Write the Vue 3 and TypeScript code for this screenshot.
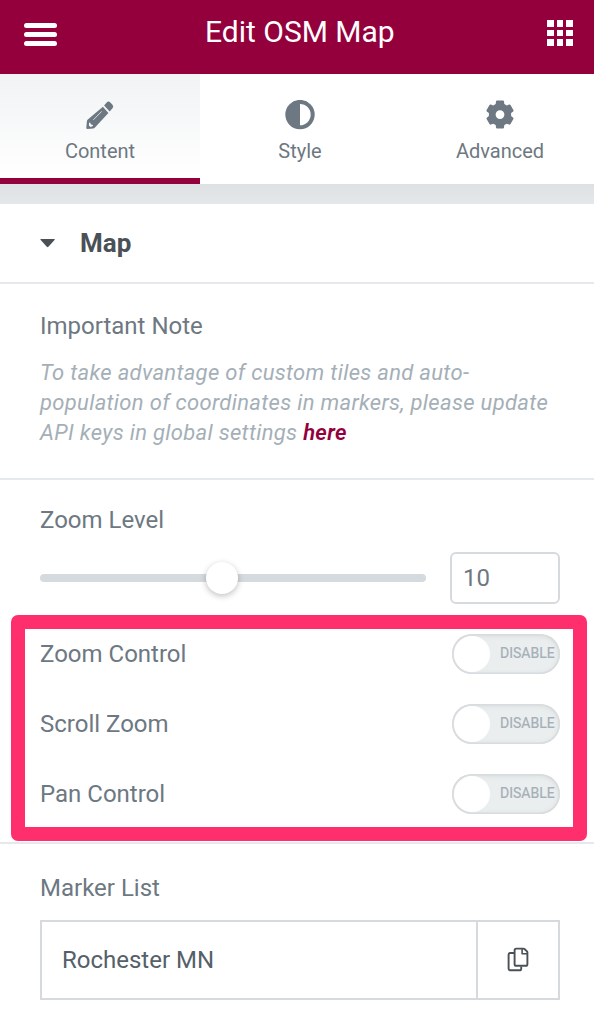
<script setup lang="ts">
import { ref } from 'vue'

type TabId = 'content' | 'style' | 'advanced'

interface Tab {
  id: TabId
  label: string
}

interface SwitchControl {
  label: string
  enabled: boolean
}

const tabs: Tab[] = [
  { id: 'content', label: 'Content' },
  { id: 'style', label: 'Style' },
  { id: 'advanced', label: 'Advanced' },
]
const activeTab = ref<TabId>('content')

const zoomLevel = ref<number>(10)
const sliderPercent = 47.2

const switches = ref<SwitchControl[]>([
  { label: 'Zoom Control', enabled: false },
  { label: 'Scroll Zoom', enabled: false },
  { label: 'Pan Control', enabled: false },
])

const markers: string[] = ['Rochester MN']
</script>

<template>
  <div class="panel">
    <header class="header">
      <button class="menu" aria-label="Menu">
        <span></span><span></span><span></span>
      </button>
      <h1 class="title">Edit OSM Map</h1>
      <button class="apps" aria-label="Widgets">
        <span v-for="n in 9" :key="n"></span>
      </button>
    </header>

    <nav class="tabs">
      <button
        v-for="tab in tabs"
        :key="tab.id"
        class="tab"
        :class="{ active: tab.id === activeTab }"
        @click="activeTab = tab.id"
      >
        <svg v-if="tab.id === 'content'" class="tab-icon" viewBox="0 0 30 30">
          <path
            d="M17.9 6.8 L23.4 13 L10.2 27.3 Q9.5 28.2 8.4 28.4 L2.4 29 Q1.2 29 1.3 27.8 L1.9 21.2 Q2 20.3 2.8 19.5 Z"
            fill="currentColor"
          />
          <path
            d="M19.1 5.5 L21.7 2.5 Q23.3 .7 25.1 2.3 L27.3 4.5 Q29.2 6.4 27.5 8.3 L24.7 11.6 Z"
            fill="currentColor"
          />
          <path d="M8.6 19.6 L16.4 11.7" fill="none" stroke="#f7f8f9" stroke-width=".75" stroke-linecap="round" />
          <path d="M4.1 22.8 Q5 22 5.4 23 Q5.4 24.6 7 24.8 Q8.6 24.8 7.8 25.9 L5.6 26.9 L3.9 25.5 Z" fill="#f7f8f9" />
        </svg>
        <svg v-else-if="tab.id === 'style'" class="tab-icon" viewBox="0 0 30 30">
          <circle cx="15" cy="14.6" r="12.7" fill="none" stroke="currentColor" stroke-width="4" />
          <path d="M15 1.5 A13.1 13.1 0 0 0 15 27.7 Z" fill="currentColor" />
        </svg>
        <svg v-else class="tab-icon" viewBox="0 0 30 30">
          <path
            fill="currentColor"
            fill-rule="evenodd"
            d="M12 .6 H18 Q18.9 .6 19 1.5 L19.3 4 L21.8 5.4 L24.1 4.5 Q25 4.2 25.5 5 L28.4 10 Q28.8 10.8 28.2 11.4 L26.1 13.1 V16 L28.2 17.7 Q28.8 18.3 28.4 19.1 L25.5 24.1 Q25 24.9 24.1 24.6 L21.8 23.7 L19.3 25.1 L19 27.6 Q18.9 28.5 18 28.5 H12 Q11.1 28.5 11 27.6 L10.7 25.1 L8.2 23.7 L5.9 24.6 Q5 24.9 4.5 24.1 L1.6 19.1 Q1.2 18.3 1.8 17.7 L3.9 16 V13.1 L1.8 11.4 Q1.2 10.8 1.6 10 L4.5 5 Q5 4.2 5.9 4.5 L8.2 5.4 L10.7 4 L11 1.5 Q11.1 .6 12 .6 Z M15 10.2 A4.4 4.4 0 1 0 15 19 A4.4 4.4 0 1 0 15 10.2 Z"
          />
        </svg>
        <span class="tab-label">{{ tab.label }}</span>
      </button>
    </nav>

    <div class="gap"></div>

    <section class="section-title">
      <svg class="caret" viewBox="0 0 16 10"><path d="M.9 1 H14.3 Q15.3 1.2 14.5 2.1 L8.4 8.8 Q7.6 9.6 6.8 8.8 L.7 2.1 Q-.1 1.2 .9 1 Z" /></svg>
      <h2>Map</h2>
    </section>

    <section class="note">
      <div class="label">Important Note</div>
      <p>
        To take advantage of custom tiles and auto-<br />population of coordinates in markers, please update<br />API
        keys in global settings <a>here</a>
      </p>
    </section>

    <section class="controls">
      <div class="label">Zoom Level</div>
      <div class="slider-row">
        <div class="slider">
          <div class="handle" :style="{ left: sliderPercent + '%' }"></div>
        </div>
        <div class="number">{{ zoomLevel }}</div>
      </div>

      <div class="highlight">
        <div v-for="item in switches" :key="item.label" class="switch-row">
          <div class="label">{{ item.label }}</div>
          <button class="switch" role="switch" :aria-checked="item.enabled" @click="item.enabled = !item.enabled">
            <span class="knob"></span>
            <span class="switch-text">{{ item.enabled ? 'ENABLE' : 'DISABLE' }}</span>
          </button>
        </div>
      </div>
    </section>

    <section class="markers">
      <div class="label">Marker List</div>
      <div v-for="marker in markers" :key="marker" class="marker">
        <div class="marker-name">{{ marker }}</div>
        <button class="copy" aria-label="Duplicate">
          <svg viewBox="0 0 22 26">
            <g fill="none" stroke="currentColor" stroke-width="1.9" stroke-linejoin="round">
              <path d="M7.3 6 H3.2 Q1.6 6 1.6 7.6 V21.7 Q1.6 23.3 3.2 23.3 H12.6 Q14.2 23.3 14.2 21.7 V19.6" />
              <path d="M9.2 1.6 H16.4 Q17 1.6 17.5 2 L20 4.4 Q20.4 4.9 20.4 5.5 V17.2 Q20.4 18.8 18.8 18.8 H9.2 Q7.6 18.8 7.6 17.2 V3.2 Q7.6 1.6 9.2 1.6 Z" />
              <path d="M15.1 1.8 V6.8 H20.2" stroke-width="1.6" />
            </g>
          </svg>
        </button>
      </div>
    </section>
  </div>
</template>

<style>
body {
  margin: 0;
  background: #fff;
}
</style>

<style scoped>
.panel {
  width: 594px;
  height: 1028px;
  overflow: hidden;
  background: #fff;
  color: #6d7882;
  font-family: Roboto, 'Liberation Sans', sans-serif;
}

.panel * {
  box-sizing: border-box;
}

button {
  margin: 0;
  padding: 0;
  border: 0;
  background: none;
  color: inherit;
  font: inherit;
}

.header {
  display: flex;
  justify-content: space-between;
  height: 74px;
  padding: 0 21px 0 23.5px;
  background: #93003c;
  color: #fff;
}

.menu {
  display: flex;
  flex-direction: column;
  gap: 4px;
  width: 33px;
  padding-top: 23px;
}

.menu span {
  height: 5px;
  border-radius: 2.5px;
  background: #fff;
}

.title {
  margin: 0 4px 0 0;
  font-size: 30px;
  font-weight: 400;
  line-height: 64px;
}

.apps {
  display: grid;
  grid-template-columns: repeat(3, 6.6px);
  grid-auto-rows: 6.6px;
  align-content: start;
  gap: 3px;
  padding-top: 20px;
}

.apps span {
  background: #fff;
}

.tabs {
  display: flex;
  height: 110px;
}

.tab {
  display: flex;
  flex: 0 0 200px;
  flex-direction: column;
  align-items: center;
  padding-top: 26px;
  border-bottom: 6px solid transparent;
}

.tab.active {
  border-bottom-color: #93003c;
  background: linear-gradient(#f1f3f4, #fff);
}

.tab-icon {
  display: block;
  width: 30px;
  height: 30px;
}

.tab-label {
  font-size: 20px;
  line-height: 24px;
  margin-top: 9px;
}

.gap {
  height: 20px;
  background: linear-gradient(#dde1e4, #e5e8eb);
}

.section-title {
  display: flex;
  align-items: center;
  gap: 24px;
  height: 80px;
  padding: 0 40px;
  border-bottom: 2px solid #e6e9ec;
  color: #495157;
}

.caret {
  width: 16px;
  height: 10px;
  fill: #495157;
}

h2 {
  margin: 0;
  font-size: 26px;
  font-weight: 700;
  line-height: 30px;
}

.label {
  font-size: 24px;
  line-height: 28px;
}

.note {
  height: 196px;
  padding: 28px 40px 0;
  border-bottom: 2px solid #e6e9ec;
}

.note p {
  margin: 18px 0 0;
  color: #a4afb7;
  font-size: 22px;
  font-style: italic;
  letter-spacing: 0.31px;
  line-height: 30px;
  white-space: nowrap;
}

.note a {
  color: #93003c;
  font-weight: 600;
}

.controls {
  height: 364px;
  padding-top: 26px;
  border-bottom: 2px solid #e6e9ec;
}

.controls > .label {
  padding-left: 40px;
}

.slider-row {
  display: flex;
  align-items: center;
  gap: 24px;
  margin: 18px 34px 0 40px;
}

.slider {
  position: relative;
  flex: 1;
  height: 8px;
  border-radius: 4px;
  background: #d5dadf;
}

.handle {
  position: absolute;
  top: -12px;
  width: 32px;
  height: 32px;
  margin-left: -16px;
  border-radius: 50%;
  background: #fff;
  box-shadow: 0 2px 6px rgba(0, 0, 0, 0.25);
}

.number {
  width: 110px;
  height: 52px;
  padding-left: 11px;
  border: 2px solid #d5dadf;
  border-radius: 6px;
  font-size: 24px;
  line-height: 48px;
}

.highlight {
  width: 576px;
  height: 226px;
  margin: 11px 0 0 11px;
  padding: 5px 13px 0 15px;
  border: 14px solid #ff2f6d;
  border-radius: 7px;
}

.switch-row {
  display: flex;
  align-items: flex-start;
  justify-content: space-between;
  height: 70px;
}

.switch-row .label {
  padding-top: 6px;
}

.switch {
  display: flex;
  align-items: center;
  width: 108px;
  height: 40px;
  padding: 2px;
  border-radius: 20px;
  background: #ebeeef;
  box-shadow: inset 0 0 0 1.5px #d8dcde, inset 0 1px 6px rgba(0, 0, 0, 0.1);
}

.knob {
  width: 36px;
  height: 36px;
  border-radius: 50%;
  background: #fff;
}

.switch-text {
  padding: 0 0 2px 10px;
  color: #a4afb7;
  font-size: 14px;
  line-height: 18px;
  -webkit-text-stroke: 0.2px #a4afb7;
}

.markers {
  padding: 30px 34px 0 40px;
}

.marker {
  display: flex;
  height: 80px;
  margin-top: 18px;
  border: 2px solid #d5dadf;
}

.marker-name {
  flex: 1;
  padding-left: 20px;
  color: #556068;
  font-size: 24px;
  line-height: 76px;
}

.copy {
  display: flex;
  align-items: center;
  justify-content: center;
  width: 82px;
  border-left: 2px solid #d5dadf;
  color: #495157;
}

.copy svg {
  width: 22px;
  height: 26px;
}
</style>
